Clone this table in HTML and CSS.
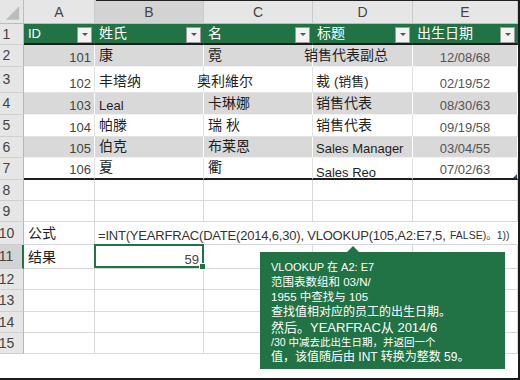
FILE: index.html
```html
<!DOCTYPE html>
<html lang="zh">
<head>
<meta charset="utf-8">
<title>VLOOKUP YEARFRAC</title>
<link rel="stylesheet" href="styles.css">
</head>
<body>
<div class="frame">
  <div class="sheet">
    <div class="corner"><svg width="24" height="24" viewBox="0 0 24 24"><polygon points="20,6 20,20 6,20" fill="#bdbdbd"/></svg></div>
    <div class="ch">A</div><div class="ch sel">B</div><div class="ch">C</div><div class="ch">D</div><div class="ch">E</div>

    <div class="rh">1</div>
    <div class="hd"><span>ID</span><span class="flt"></span></div>
    <div class="hd"><span class="cjk">姓氏</span><span class="flt"></span></div>
    <div class="hd"><span class="cjk">名</span><span class="flt"></span></div>
    <div class="hd"><span class="cjk">标题</span><span class="flt"></span></div>
    <div class="hd last"><span class="cjk">出生日期</span><span class="flt"></span></div>

    <div class="rh">2</div>
    <div class="g num">101</div>
    <div class="g txt cjk">康</div>
    <div class="g txt cjk">霓</div>
    <div class="g txt cjk"><span class="shift10">销售代表副总</span></div>
    <div class="g date">12/08/68</div>

    <div class="rh">3</div>
    <div class="w num">102</div>
    <div class="w txt cjk">丰塔纳</div>
    <div class="w txt cjk"><span class="shift7">奥利維尔</span></div>
    <div class="w txtd cjk"><span>裁 <span class="sm">(销售)</span></span></div>
    <div class="w date">02/19/52</div>

    <div class="rh">4</div>
    <div class="g num">103</div>
    <div class="g txt">Leal</div>
    <div class="g txt cjk">卡琳娜</div>
    <div class="g txtd cjk">销售代表</div>
    <div class="g date">08/30/63</div>

    <div class="rh">5</div>
    <div class="w num">104</div>
    <div class="w txt cjk">帕滕</div>
    <div class="w txt cjk">瑞 秋</div>
    <div class="w txtd cjk">销售代表</div>
    <div class="w date">09/19/58</div>

    <div class="rh">6</div>
    <div class="g num">105</div>
    <div class="g txt cjk">伯克</div>
    <div class="g txt cjk">布莱恩</div>
    <div class="g txtd">Sales Manager</div>
    <div class="g date">03/04/55</div>

    <div class="rh">7</div>
    <div class="w b7 num">106</div>
    <div class="w b7 txt cjk">夏</div>
    <div class="w b7 txt cjk">衢</div>
    <div class="w b7 txtd"><span class="low">Sales Reo</span></div>
    <div class="w b7 date handle">07/02/63</div>

    <div class="rh">8</div><div></div><div></div><div></div><div></div><div></div>
    <div class="rh">9</div><div></div><div></div><div></div><div></div><div></div>

    <div class="rh">10</div>
    <div class="txt cjk">公式</div>
    <div class="formula"><span>=INT(YEARFRAC(DATE(2014,6,30), VLOOKUP(105,A2:E7,5, <span class="fsmall">FALSE)。1))</span></span></div>

    <div class="rh sel">11</div>
    <div class="txt cjk">结果</div>
    <div class="num result">59<span class="selbox"><span class="fill"></span></span></div>
    <div></div><div></div><div></div>

    <div class="rh">12</div><div></div><div></div><div></div><div></div><div></div>
    <div class="rh">13</div><div></div><div></div><div></div><div></div><div></div>
    <div class="rh">14</div><div></div><div></div><div></div><div></div><div></div>
    <div class="rh">15</div><div></div><div></div><div></div><div></div><div></div>
  </div>

  <div class="tip">
    <div class="l1">VLOOKUP 在 A2: E7</div>
    <div class="l2">范围表数组和 03/N/</div>
    <div class="l3">1955 中查找与 105</div>
    <div class="l4">查找值相对应的员工的出生日期。</div>
    <div class="l5">然后。YEARFRAC从 2014/6</div>
    <div class="l6">/30 中减去此出生日期，并返回一个</div>
    <div class="l7">值，该值随后由 INT 转换为整数 59。</div>
  </div>
</div>
</body>
</html>
```

FILE: styles.css
```css
body {
  margin: 0;
  background: #fff;
}

.frame {
  position: relative;
  width: 520px;
  height: 380px;
  box-sizing: border-box;
  border-right: 2px solid #1b1b1b;
  border-bottom: 2px solid #1b1b1b;
  overflow: hidden;
  font-family: "Liberation Sans", "Noto Sans CJK SC", sans-serif;
}

.frame::before {
  content: "";
  position: absolute;
  top: 0;
  left: 96px;
  right: 0;
  height: 1px;
  background: #222;
  z-index: 2;
}

.sheet {
  display: grid;
  grid-template-columns: 24px 71px 109px 109px 100px 105px;
  grid-template-rows: 24px 21px 22px 26px 22px 22px 21px 22px 21px 21px 23px 24px 21px 22px 21px 21px;
}

.sheet > div {
  box-sizing: border-box;
  display: flex;
  align-items: flex-end;
  white-space: nowrap;
  min-width: 0;
  font-size: 13px;
  line-height: 17px;
  color: #1f1f1f;
  border-right: 1px solid #d9d9d9;
  border-bottom: 1px solid #d9d9d9;
}

.sheet > .corner {
  background: #e6e6e6;
  border-right-color: #bcbcbc;
  border-bottom-color: #bcbcbc;
  align-items: flex-start;
}

.sheet > .ch {
  background: #e6e6e6;
  justify-content: center;
  align-items: center;
  padding-top: 2px;
  font-size: 14px;
  color: #444;
  border-right-color: #cacaca;
  border-bottom-color: #bcbcbc;
}

.sheet > .ch.sel {
  background: #d3d3d3;
}

.sheet > .rh {
  background: #e6e6e6;
  color: #444;
  font-size: 14px;
  justify-content: center;
  align-items: center;
  padding-right: 10px;
  border-right-color: #b5b5b5;
  border-bottom-color: #cfcfcf;
}

.sheet > .rh.sel {
  background: #d3d3d3;
  border-right: 2px solid #217346;
}

.sheet > .hd {
  background: #217346;
  color: #fff;
  justify-content: space-between;
  align-items: center;
  padding-left: 4px;
  border-right-color: #217346;
  border-bottom: 2px solid #1c1c1c;
}

.flt {
  width: 15px;
  height: 16px;
  box-sizing: border-box;
  margin: 2px 2px 0 0;
  background: #f3f3f3;
  border: 1px solid #9c9c9c;
  display: flex;
  align-items: center;
  justify-content: center;
}

.flt::after {
  content: "";
  border-left: 3px solid transparent;
  border-right: 3px solid transparent;
  border-top: 3px solid #555;
}

.sheet > .g {
  background: #d9d9d9;
  border-right-color: #fff;
  border-bottom-color: #f2f2f2;
}

.sheet > .w {
  background: #fff;
  border-right-color: #e2e2e2;
  border-bottom-color: #e2e2e2;
}

.sheet > .b7 {
  border-bottom: 2px solid #1e1e1e;
}

.sheet > .num {
  justify-content: flex-end;
  padding-right: 3px;
  color: #444;
}

.sheet > .txt {
  padding-left: 4px;
}

.sheet > .txtd {
  padding-left: 3px;
}

.sheet > .date {
  justify-content: center;
  color: #555;
}

.sheet > .cjk,
.cjk {
  font-size: 14px;
}

.sheet > .cjk {
  padding-bottom: 2px;
}

.sm {
  font-size: 13px;
}

.shift10 {
  margin-left: -13px;
}

.shift7 {
  margin-left: -11px;
}

.low {
  margin-bottom: -3px;
}

.sheet > .handle {
  position: relative;
}

.handle::after {
  content: "";
  position: absolute;
  right: 0;
  bottom: 0;
  border-left: 4px solid transparent;
  border-bottom: 4px solid #2b4f9c;
}

.sheet > .formula {
  grid-column: span 4;
  padding-left: 3px;
  color: #333;
  letter-spacing: -0.2px;
  border-right-color: transparent;
}

.fsmall {
  font-size: 10.5px;
  letter-spacing: 0;
  background: #fff;
  padding: 1px 1px 2px;
  vertical-align: 1px;
}

.sheet > .result {
  position: relative;
  padding-right: 4px;
}

.selbox {
  position: absolute;
  left: -1px;
  top: -1px;
  right: -1px;
  bottom: 0;
  border: 2px solid #217346;
}

.fill {
  position: absolute;
  right: -4px;
  bottom: -4px;
  width: 5px;
  height: 5px;
  background: #217346;
  border: 1px solid #fff;
}

.tip {
  position: absolute;
  left: 260px;
  top: 252px;
  width: 245px;
  height: 117px;
  box-sizing: border-box;
  padding: 8px 0 0 11px;
  background: #217346;
  color: #fff;
  line-height: 15px;
  white-space: nowrap;
  z-index: 3;
}

.tip::before {
  content: "";
  position: absolute;
  top: -6px;
  left: 87px;
  border-left: 6px solid transparent;
  border-right: 6px solid transparent;
  border-bottom: 6px solid #217346;
}

.l1 { font-size: 11px; }
.l2 { font-size: 11.5px; }
.l3 { font-size: 11.5px; }
.l4 { font-size: 12px; }
.l5 { font-size: 13px; }
.l6 { font-size: 10.5px; }
.l7 { font-size: 12px; }
```
